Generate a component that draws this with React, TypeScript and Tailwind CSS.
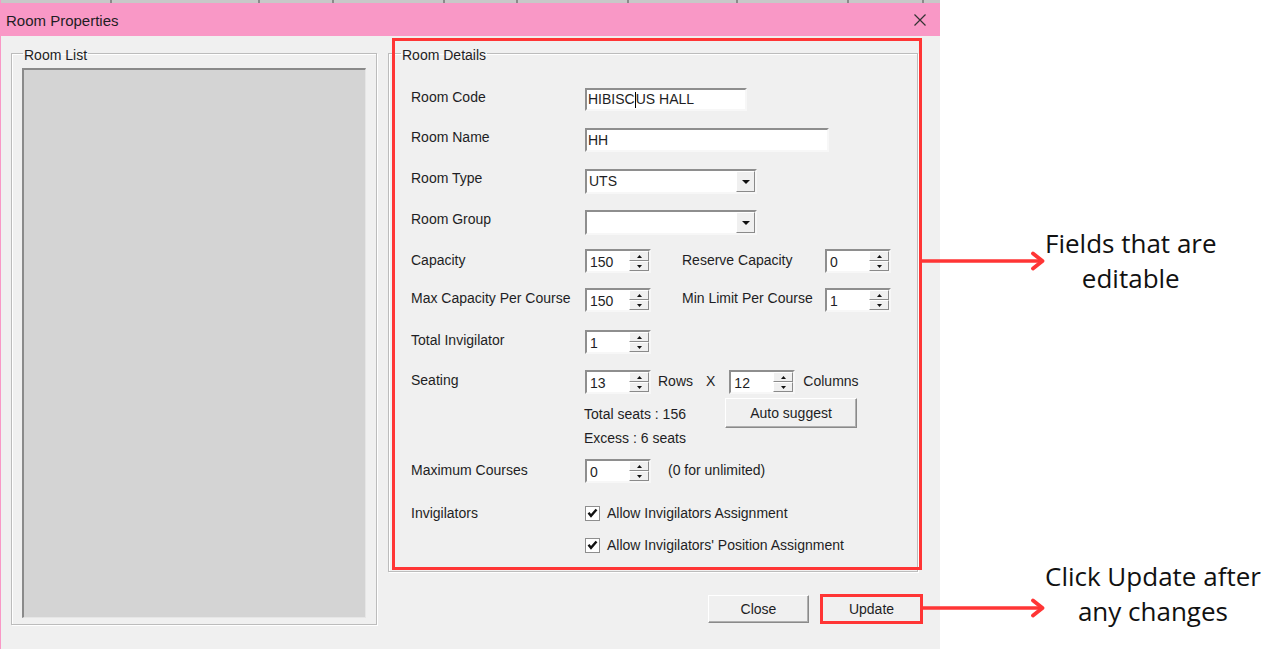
import React from "react";

const sunken =
  "border-2 border-t-[#8e8e8e] border-l-[#8e8e8e] border-r-[#f7f7f7] border-b-[#f7f7f7] bg-white";
const raised =
  "border border-t-white border-l-white border-r-[#8a8a8a] border-b-[#8a8a8a] bg-[#f0f0f0]";

function Tri({ up }: { up?: boolean }) {
  return (
    <svg width="5" height="3" viewBox="0 0 5 3">
      {up ? <path d="M2.5 0 L5 3 L0 3 Z" fill="#111" /> : <path d="M0 0 L5 0 L2.5 3 Z" fill="#111" />}
    </svg>
  );
}

function Spin({ value }: { value: string }) {
  return (
    <div className={`flex h-[24px] w-[66px] ${sunken}`}>
      <div className="flex-1 pl-[3px] text-[14px] leading-[20px] pt-[1px]">{value}</div>
      <div className="flex w-[20px] flex-col bg-[#f0f0f0]">
        <div className={`flex flex-1 items-center justify-center ${raised}`}>
          <Tri up />
        </div>
        <div className={`flex flex-1 items-center justify-center ${raised}`}>
          <Tri />
        </div>
      </div>
    </div>
  );
}

function Combo({ value }: { value: string }) {
  return (
    <div className={`flex h-[25px] w-[172px] ${sunken}`}>
      <div className="flex-1 pl-[2px] text-[14px] leading-[21px]">{value}</div>
      <div className={`flex w-[19px] items-center justify-center ${raised}`}>
        <svg width="8" height="4" viewBox="0 0 8 4">
          <path d="M0 0 L8 0 L4 4 Z" fill="#111" />
        </svg>
      </div>
    </div>
  );
}

function Check({ label }: { label: string }) {
  return (
    <div className="flex items-center gap-[7px]">
      <div className="flex h-[15px] w-[15px] items-center justify-center border border-[#8e8e8e] bg-white">
        <svg width="11" height="10" viewBox="0 0 11 10">
          <path d="M1.5 4.8 L4 7.8 L9.5 1.5" stroke="#111" strokeWidth="2.4" fill="none" />
        </svg>
      </div>
      <span className="text-[14px] leading-[16px]">{label}</span>
    </div>
  );
}

function Label({ children }: { children: React.ReactNode }) {
  return <div className="w-[174px] pt-[1px] text-[14px] leading-[16px]">{children}</div>;
}

function Arrow() {
  return (
    <svg width="123" height="20" viewBox="0 0 123 20" className="shrink-0">
      <line x1="0" y1="10" x2="119" y2="10" stroke="#ff3535" strokeWidth="3.5" />
      <polyline
        points="111,2.5 120.5,10 111,17.5"
        stroke="#ff3535"
        strokeWidth="3.8"
        fill="none"
        strokeLinecap="round"
        strokeLinejoin="round"
      />
    </svg>
  );
}

const tabWidths = [111, 148, 74, 111, 73, 111, 109, 111, 75];

export default function App() {
  return (
    <div className="flex h-[649px] w-[1269px] overflow-hidden bg-white font-['Liberation_Sans',Arial,sans-serif] text-[#1e1e24]">
      {/* dialog window */}
      <div className="flex h-full w-[940px] shrink-0 flex-col border-l border-[#f998c6]">
        <div className="flex h-[3px] bg-[#c8c8c8]">
          {tabWidths.map((w, i) => (
            <div key={i} style={{ width: w }} className="h-full border-r-2 border-[#8a8a8a]" />
          ))}
        </div>
        <div className="flex h-[33px] items-center justify-between bg-[#f998c6] pl-[5px] pr-[14px] pt-[3px]">
          <span className="text-[15px]">Room Properties</span>
          <svg width="12" height="12" viewBox="0 0 12 12" className="-mt-[3px]">
            <path d="M0.5 0.5 L11.5 11.5 M11.5 0.5 L0.5 11.5" stroke="#333" strokeWidth="1.2" />
          </svg>
        </div>

        <div className="flex flex-1 gap-[11px] bg-[#f0f0f0] pl-[10px] pt-[9px]">
          {/* room list */}
          <fieldset className="h-[580px] w-[366px] border border-[#bcbcbc] shadow-[1px_1px_0_#fff,inset_1px_1px_0_#fff]">
            <legend className="ml-[11px] translate-y-[2px] px-[1px] text-[14px] leading-[16px]">Room List</legend>
            <div className="ml-[10px] mt-[7px] h-[550px] w-[344px] border-t-2 border-l-2 border-r border-b border-t-[#8a8a8a] border-l-[#8a8a8a] border-r-[#e6e6e6] border-b-[#e6e6e6] bg-[#d4d4d4]" />
          </fieldset>

          {/* room details */}
          <div className="flex w-[535px] flex-col">
            <div className="relative">
              <fieldset className="h-[527px] w-[530px] border border-[#bcbcbc] shadow-[1px_1px_0_#fff,inset_1px_1px_0_#fff]">
                <legend className="ml-[12px] translate-y-[2px] px-[1px] text-[14px] leading-[16px]">Room Details</legend>
                <div className="flex flex-col pl-[22px] pt-[27px]">
                  <div className="flex h-[40px] items-start">
                    <Label>Room Code</Label>
                    <div className={`flex h-[23px] w-[162px] items-center pl-[1px] text-[14px] ${sunken}`}>
                      HIBISC
                      <span className="inline-block h-[16px] w-[1px] bg-black" />
                      US HALL
                    </div>
                  </div>
                  <div className="flex h-[41px] items-start">
                    <Label>Room Name</Label>
                    <div className={`flex h-[24px] w-[244px] items-center pl-[1px] text-[14px] ${sunken}`}>HH</div>
                  </div>
                  <div className="flex h-[41px] items-start">
                    <Label>Room Type</Label>
                    <Combo value="UTS" />
                  </div>
                  <div className="flex h-[39px] items-start">
                    <Label>Room Group</Label>
                    <Combo value="" />
                  </div>
                  <div className="flex h-[39px] items-start">
                    <Label>
                      <div className="pt-[2px]">Capacity</div>
                    </Label>
                    <Spin value="150" />
                    <div className="ml-[31px] w-[143px] pt-[3px] text-[14px] leading-[16px]">Reserve Capacity</div>
                    <Spin value="0" />
                  </div>
                  <div className="flex h-[42px] items-start">
                    <Label>
                      <div className="pt-[1px]">Max Capacity Per Course</div>
                    </Label>
                    <Spin value="150" />
                    <div className="ml-[31px] w-[143px] pt-[2px] text-[14px] leading-[16px]">Min Limit Per Course</div>
                    <Spin value="1" />
                  </div>
                  <div className="flex h-[40px] items-start">
                    <Label>
                      <div className="pt-[1px]">Total Invigilator</div>
                    </Label>
                    <Spin value="1" />
                  </div>
                  <div className="flex h-[28px] items-start">
                    <Label>
                      <div className="pt-[1px]">Seating</div>
                    </Label>
                    <Spin value="13" />
                    <span className="ml-[7px] pt-[3px] text-[14px] leading-[16px]">Rows</span>
                    <span className="ml-[13px] pt-[3px] text-[14px] leading-[16px]">X</span>
                    <div className="ml-[14px]">
                      <Spin value="12" />
                    </div>
                    <span className="ml-[8px] pt-[3px] text-[14px] leading-[16px]">Columns</span>
                  </div>
                  <div className="flex h-[61px] items-start pl-[173px]">
                    <div className="flex w-[141px] flex-col pt-[4px] text-[14px] leading-[24px]">
                      <span>Total seats : 156</span>
                      <span>Excess : 6 seats</span>
                    </div>
                    <button className={`h-[30px] w-[132px] text-[14px] ${raised} shadow-[inset_-1px_-1px_0_#b0b0b0]`}>
                      Auto suggest
                    </button>
                  </div>
                  <div className="flex h-[44px] items-start">
                    <Label>
                      <div className="pt-[2px]">Maximum Courses</div>
                    </Label>
                    <Spin value="0" />
                    <span className="ml-[17px] pt-[3px] text-[14px] leading-[16px]">(0 for unlimited)</span>
                  </div>
                  <div className="flex items-start">
                    <Label>
                      <div className="pt-[1px]">Invigilators</div>
                    </Label>
                    <div className="flex flex-col gap-[16px] pt-[2px]">
                      <Check label="Allow Invigilators Assignment" />
                      <Check label="Allow Invigilators' Position Assignment" />
                    </div>
                  </div>
                </div>
              </fieldset>
              {/* highlight around the editable fields */}
              <div className="pointer-events-none absolute left-[4px] top-[-7px] h-[532px] w-[530px] border-[3px] border-[#ff3535]" />
            </div>

            <div className="mt-[22px] flex justify-end gap-[11px]">
              <button className={`mt-[1px] h-[28px] w-[101px] text-[14px] ${raised} shadow-[inset_-1px_-1px_0_#b0b0b0]`}>
                Close
              </button>
              <button className="h-[30px] w-[103px] border-[3px] border-[#ff3535] bg-[#f0f0f0] text-[14px]">
                Update
              </button>
            </div>
          </div>
        </div>
      </div>

      {/* annotations */}
      <div className="flex flex-1 flex-col font-['Open_Sans',sans-serif] text-[26px] leading-[35px] text-[#111]">
        <div className="-ml-[18px] mt-[226px] flex items-center">
          <Arrow />
          <div className="text-center">
            Fields that are
            <br />
            editable
          </div>
        </div>
        <div className="-ml-[18px] mt-[263px] flex items-start">
          <div className="mt-[39px]">
            <Arrow />
          </div>
          <div className="text-center">
            Click Update after
            <br />
            any changes
          </div>
        </div>
      </div>
    </div>
  );
}
